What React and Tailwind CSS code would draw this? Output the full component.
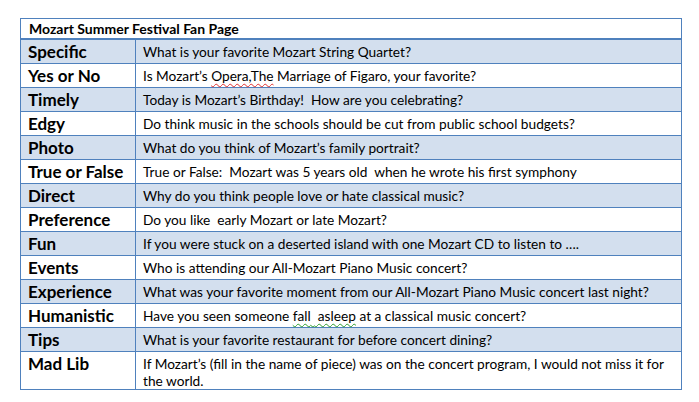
import React from "react";

const rows = [
  ["Specific", "What is your favorite Mozart String Quartet?"],
  ["Yes or No", "YESNO"],
  ["Timely", "Today is Mozart\u2019s Birthday!\u00a0 How are you celebrating?"],
  ["Edgy", "Do think music in the schools should be cut from public school budgets?"],
  ["Photo", "What do you think of Mozart\u2019s family portrait?"],
  ["True or False", "True or False:\u00a0 Mozart was 5 years old\u00a0 when he wrote his first symphony"],
  ["Direct", "Why do you think people love or hate classical music?"],
  ["Preference", "Do you like\u00a0 early Mozart or late Mozart?"],
  ["Fun", "If you were stuck on a deserted island with one Mozart CD to listen to \u2026."],
  ["Events", "Who is attending our All-Mozart Piano Music concert?"],
  ["Experience", "What was your favorite moment from our All-Mozart Piano Music concert last night?"],
  ["Humanistic", "HUMAN"],
  ["Tips", "What is your favorite restaurant for before concert dining?"],
];

function Content({ text }) {
  if (text === "YESNO") {
    return (
      <>
        Is Mozart{"\u2019"}s{" "}
        <span className="underline decoration-wavy decoration-[#e03030] decoration-1 underline-offset-2">
          Opera,The
        </span>{" "}
        Marriage of Figaro, your favorite?
      </>
    );
  }
  if (text === "HUMAN") {
    return (
      <>
        Have you seen someone{" "}
        <span className="underline decoration-wavy decoration-[#2e9e2e] decoration-1 underline-offset-2">
          fall{"\u00a0"} asleep
        </span>{" "}
        at a classical music concert?
      </>
    );
  }
  return text;
}

export default function App() {
  return (
    <div
      className="w-[699px] h-[402px] bg-white pt-[18px] pl-[20px] text-black"
      style={{ fontFamily: "Lato, 'Open Sans', sans-serif" }}
    >
      <div className="w-[662px] border border-[#4f81bd]">
        <div className="h-[21px] border-b-2 border-[#4f81bd] pl-[8px] text-[14px] font-bold leading-[19px]">
          Mozart Summer Festival Fan Page
        </div>
        {rows.map(([label, text], i) => (
          <div
            key={label}
            className={`flex h-[24px] border-b border-[#4f81bd] ${i % 2 === 0 ? "bg-[#d3dfee]" : "bg-white"}`}
          >
            <div className="w-[115px] shrink-0 border-r border-[#4f81bd] pl-[7px] pt-[0px] text-[17px] font-bold leading-[23px] whitespace-nowrap">
              {label}
            </div>
            <div className="pl-[7px] pt-[3px] text-[13.7px] leading-[17px] whitespace-nowrap">
              <Content text={text} />
            </div>
          </div>
        ))}
        <div className="flex h-[37px] bg-white">
          <div className="w-[115px] shrink-0 border-r border-[#4f81bd] pl-[7px] pt-[1px] text-[17px] font-bold leading-[22px]">
            Mad Lib
          </div>
          <div className="pl-[7px] pt-[3px] text-[13.7px] leading-[17px] whitespace-nowrap">
            If Mozart{"\u2019"}s (fill in the name of piece) was on the concert program, I would not miss it for
            <br />
            the world.
          </div>
        </div>
      </div>
    </div>
  );
}
